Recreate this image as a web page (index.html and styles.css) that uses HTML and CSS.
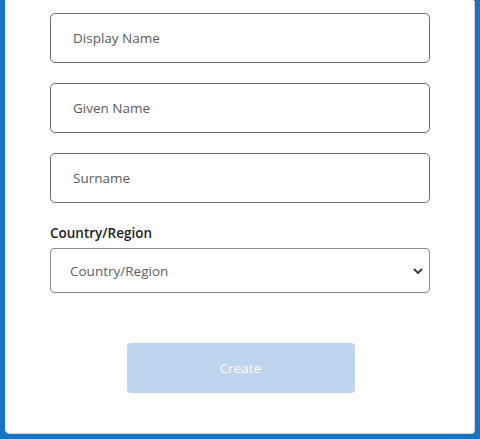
FILE: index.html
```html
<!DOCTYPE html>
<html>
<head>
<meta charset="utf-8">
<link rel="stylesheet" href="styles.css">
</head>
<body>
<div class="card">
  <form class="form">
    <input class="field" type="text" placeholder="Display Name">
    <input class="field" type="text" placeholder="Given Name">
    <input class="field" type="text" placeholder="Surname">
    <label class="label" for="country">Country/Region</label>
    <div class="select-wrap">
      <select id="country" class="select">
        <option>Country/Region</option>
      </select>
      <svg class="chevron" width="10" height="6" viewBox="0 0 10 6"><path d="M1 1 L5 5 L9 1" fill="none" stroke="#333" stroke-width="1.8"/></svg>
    </div>
    <div class="actions">
      <button type="button" class="btn">Create</button>
    </div>
  </form>
</div>
</body>
</html>
```
FILE: styles.css
```css
html, body {
  margin: 0;
  padding: 0;
  height: 100%;
}
body {
  background: #1a72c4;
  font-family: "Open Sans", "Noto Sans", sans-serif;
  overflow: hidden;
}
.card {
  background: #fff;
  margin: 0 6px 0 5px;
  height: 433px;
  border-radius: 0 0 4px 4px;
  box-shadow: 1px 1px 0 #d8d8d8;
  box-sizing: border-box;
  padding: 13px 43px 0 45px;
}
.form {
  display: flex;
  flex-direction: column;
}
.field {
  box-sizing: border-box;
  width: 380px;
  height: 50px;
  border: 1px solid #6e6e6e;
  border-radius: 5px;
  padding: 0 22px;
  font-family: inherit;
  font-size: 13.5px;
  color: #333;
  margin: 0 0 20px 0;
  outline: none;
}
.field::placeholder {
  color: #5a5a5a;
}
.label {
  font-size: 13.5px;
  font-weight: 600;
  color: #222;
  line-height: 20px;
  margin: 0 0 5px 0;
}
.select-wrap {
  position: relative;
  width: 380px;
}
.select {
  appearance: none;
  -webkit-appearance: none;
  box-sizing: border-box;
  width: 380px;
  height: 45px;
  border: 1px solid #8c8c8c;
  border-radius: 4px;
  background: #fff;
  padding: 0 19px;
  font-family: inherit;
  font-size: 13.5px;
  color: #5e5e5e;
  outline: none;
}
.chevron {
  position: absolute;
  right: 7px;
  top: 20px;
}
.actions {
  display: flex;
  justify-content: center;
  margin-top: 50px;
}
.btn {
  width: 228px;
  height: 50px;
  border: none;
  border-radius: 4px;
  background: #bfd4ee;
  color: #fff;
  font-family: inherit;
  font-size: 13.5px;
}
```
